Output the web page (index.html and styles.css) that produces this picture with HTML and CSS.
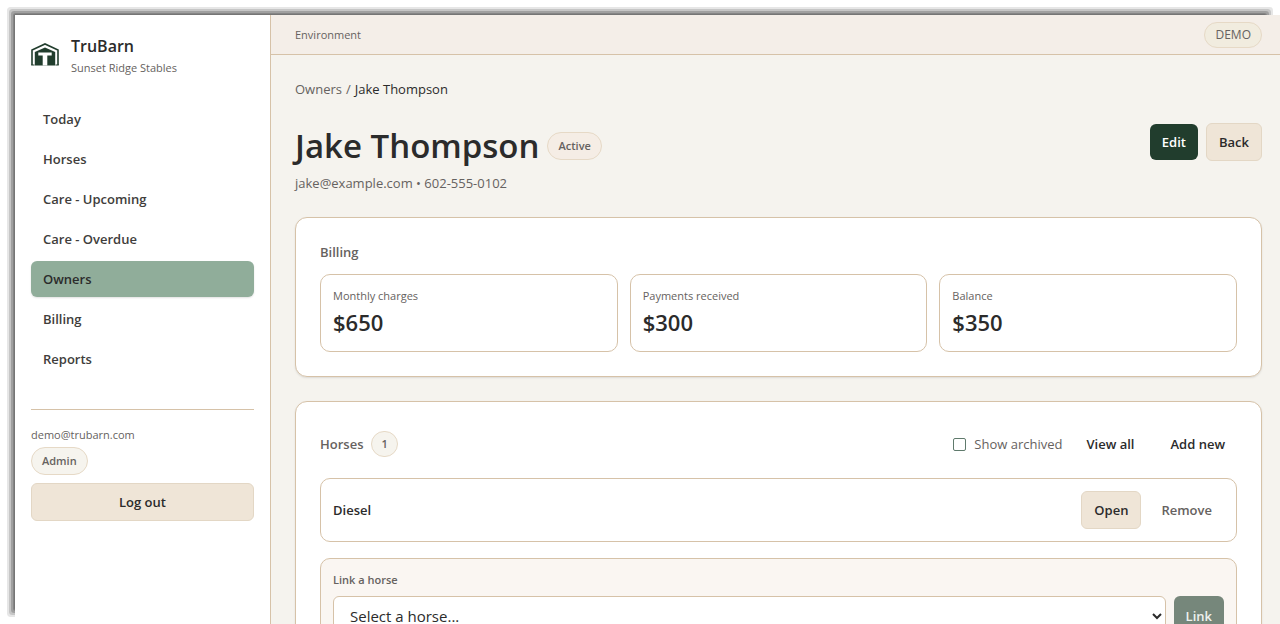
FILE: index.html
```html
<!DOCTYPE html>
<html lang="en">
<head>
<meta charset="utf-8">
<meta name="viewport" content="width=device-width, initial-scale=1">
<title>Jake Thompson - TruBarn</title>
<link rel="stylesheet" href="styles.css">
</head>
<body>
<div class="frame">
  <div class="app">
    <aside class="sidebar">
      <div class="brand">
        <svg class="brand-logo" viewBox="0 0 28 24" aria-hidden="true">
          <path d="M1 22V7L14 1l13 6v15" fill="none" stroke="#213d2d" stroke-width="1.600"/>
          <path d="M0.200 22h3.300M24.500 22h3.300" stroke="#213d2d" stroke-width="1"/>
          <path d="M3.800 22.500V9L14 4.500 24.200 9v13.500z" fill="#213d2d"/>
          <path d="M7.300 9.500h13.400v3h-4.400v10h-4.600v-10H7.300z" fill="#fff"/>
        </svg>
        <div>
          <div class="brand-name">TruBarn</div>
          <div class="small">Sunset Ridge Stables</div>
        </div>
      </div>
      <nav class="nav">
        <a class="nav-item" href="#">Today</a>
        <a class="nav-item" href="#">Horses</a>
        <a class="nav-item" href="#">Care - Upcoming</a>
        <a class="nav-item" href="#">Care - Overdue</a>
        <a class="nav-item nav-item-active" href="#" aria-current="page">Owners</a>
        <a class="nav-item" href="#">Billing</a>
        <a class="nav-item" href="#">Reports</a>
      </nav>
      <div class="account">
        <div class="small">demo@trubarn.com</div>
        <span class="pill pill-plain">Admin</span>
        <button class="btn btn-secondary account-logout" type="button">Log out</button>
      </div>
    </aside>
    <div class="content">
      <header class="topbar">
        <span class="small">Environment</span>
        <span class="pill pill-demo">DEMO</span>
      </header>
      <main class="main">
        <nav class="crumbs" aria-label="Breadcrumb">
          <a class="crumb-link" href="#">Owners</a>
          <span>/</span>
          <span class="crumb-current">Jake Thompson</span>
        </nav>
        <div class="page-head">
          <div>
            <div class="page-title-row">
              <h1 class="page-title">Jake Thompson</h1>
              <span class="pill pill-active">Active</span>
            </div>
            <div class="page-sub">jake@example.com • 602-555-0102</div>
          </div>
          <div class="actions">
            <button class="btn btn-primary" type="button">Edit</button>
            <a class="btn btn-secondary" href="#">Back</a>
          </div>
        </div>
        <section class="card">
          <h2 class="card-title">Billing</h2>
          <div class="stats">
            <div class="stat"><div class="stat-label">Monthly charges</div><div class="stat-value">$650</div></div>
            <div class="stat"><div class="stat-label">Payments received</div><div class="stat-value">$300</div></div>
            <div class="stat"><div class="stat-label">Balance</div><div class="stat-value">$350</div></div>
          </div>
        </section>
        <section class="card">
          <div class="card-head">
            <div class="card-heading">
              <h2 class="card-title">Horses</h2>
              <span class="pill pill-plain pill-count">1</span>
            </div>
            <div class="card-tools">
              <label class="check"><input class="check-box" type="checkbox">Show archived</label>
              <div class="tool-links">
                <a class="btn btn-ghost" href="#">View all</a>
                <a class="btn btn-ghost" href="#">Add new</a>
              </div>
            </div>
          </div>
          <div class="horse-row">
            <span class="horse-name">Diesel</span>
            <div class="actions">
              <a class="btn btn-secondary" href="#">Open</a>
              <button class="btn btn-ghost btn-muted" type="button">Remove</button>
            </div>
          </div>
          <form class="link-form">
            <label class="link-label" for="horse">Link a horse</label>
            <div class="link-fields">
              <div class="select-wrap">
                <select class="select" id="horse"><option>Select a horse...</option></select>
                <svg class="select-arrow" viewBox="0 0 10 7" aria-hidden="true"><path d="M1 1l4 4 4-4" fill="none" stroke="#2b2b2b" stroke-width="2"/></svg>
              </div>
              <button class="btn btn-primary" type="button" disabled>Link</button>
            </div>
          </form>
        </section>
      </main>
    </div>
  </div>
</div>
</body>
</html>
```
FILE: styles.css
```css
* { box-sizing: border-box; }

:root {
  --ink: #2b2b2b;
  --muted: #666260;
  --line: #d6c2a8;
  --soft-line: #e6d9c6;
  --green: #213d2d;
  --page: #f5f3ee;
}

body {
  margin: 0;
  background: #fff;
  color: var(--ink);
  font: 13px/20px "Segoe UI", "Open Sans", "Noto Sans", sans-serif;
}

a { color: inherit; text-decoration: none; }
h1, h2 { margin: 0; }

.frame {
  position: relative;
  height: 100vh;
  padding: 15px 0 0 15px;
}

/* Stepped grey shadow along the window's top and left edges */
.frame::before {
  content: "";
  position: absolute;
  inset: 15px;
  box-shadow: 0 0 0 1px #757575, 0 0 0 2px #858585, 0 0 0 4px #a0a0a0, 0 0 0 6px #c6c6c6, 0 0 0 8px #e6e6e6;
  border-radius: 1px;
}

.app {
  position: relative;
  display: flex;
  height: 100%;
  overflow: hidden;
}

.sidebar {
  flex: 0 0 256px;
  padding: 16px;
  background: #fff;
  border-right: 1px solid var(--line);
}

.small { font-size: 11px; line-height: 16px; color: var(--muted); }

.brand {
  display: flex;
  align-items: center;
  gap: 12px;
  padding-top: 3px;
  margin-bottom: 25px;
}
.brand-logo { width: 28px; height: 24px; }
.brand-name { margin-bottom: 2px; font-size: 16px; line-height: 24px; font-weight: 600; }

.nav { display: flex; flex-direction: column; gap: 4px; }
.nav-item {
  padding: 8px 12px;
  border-radius: 6px;
  font-weight: 600;
  color: #403d3b;
}
.nav-item-active {
  background: #90ad9a;
  color: var(--ink);
  box-shadow: 0 1px 2px rgba(0, 0, 0, .12);
}

.account {
  display: flex;
  flex-direction: column;
  align-items: flex-start;
  margin-top: 32px;
  padding-top: 17px;
  border-top: 1px solid var(--line);
}
.account .pill { margin: 4px 0 8px; }
.account-logout { width: 100%; }

.pill {
  display: inline-block;
  padding: 5px 10px;
  border: 1px solid var(--soft-line);
  border-radius: 999px;
  font-size: 11px;
  line-height: 16px;
  font-weight: 600;
  color: var(--muted);
}
.pill-plain { background: #f6f4ee; }
.pill-active { background: #f5ede5; }
.pill-demo { padding: 4px 10px; background: #f1ecdf; font-size: 12px; font-weight: 500; }
.pill-count { padding: 4px 9px; }

.btn {
  display: flex;
  align-items: center;
  justify-content: center;
  padding: 8px 12px;
  border: 0;
  border-radius: 6px;
  background: transparent;
  color: var(--ink);
  font: inherit;
  font-weight: 600;
  cursor: pointer;
}
.btn-primary { background: var(--green); color: #fff; }
.btn-primary:disabled { background: #76877b; color: #eef1ee; }
.btn-secondary { background: #efe5d7; border: 1px solid #e3d7c5; }
.btn-muted { color: var(--muted); }

.content {
  flex: 1;
  min-width: 0;
  display: flex;
  flex-direction: column;
  background: var(--page);
}

.topbar {
  display: flex;
  align-items: center;
  justify-content: space-between;
  min-height: 40px;
  padding: 0 18px 0 24px;
  background: #f4eee8;
  border-bottom: 1px solid var(--line);
}

.main {
  flex: 1;
  min-height: 0;
  display: flex;
  flex-direction: column;
  gap: 24px;
  padding: 24px 18px 24px 24px;
  overflow-y: auto;
  scrollbar-width: none;
}
.main > * { flex-shrink: 0; }

.crumbs { display: flex; gap: 4px; color: var(--muted); }
.crumb-current { color: var(--ink); }

.page-head {
  display: flex;
  justify-content: space-between;
  align-items: flex-start;
}
.page-title-row { display: flex; align-items: center; gap: 8px; margin-bottom: 4px; }
.page-title { font-size: 33px; line-height: 46px; font-weight: 600; }
.page-sub { color: var(--muted); }
.actions { display: flex; align-items: center; gap: 8px; }

.card {
  padding: 24px;
  background: #fff;
  border: 1px solid var(--line);
  border-radius: 12px;
  box-shadow: 0 1px 2px rgba(0, 0, 0, .1);
}
.card-title { font-size: 13px; line-height: 20px; font-weight: 600; color: var(--muted); }

.stats {
  display: grid;
  grid-template-columns: repeat(3, 1fr);
  gap: 12px;
  margin-top: 12px;
}
.stat { padding: 12px; border: 1px solid var(--line); border-radius: 10px; }
.stat-label { font-size: 11px; line-height: 18px; color: var(--muted); }
.stat-value { font-size: 22px; line-height: 34px; font-weight: 600; }

.card-head {
  display: flex;
  align-items: center;
  justify-content: space-between;
  margin-bottom: 16px;
}
.card-heading { display: flex; align-items: center; gap: 8px; }
.card-tools { display: flex; align-items: center; gap: 12px; }
.check { display: flex; align-items: center; gap: 8px; color: var(--muted); }
.check-box {
  appearance: none;
  width: 13px;
  height: 13px;
  margin: 0;
  border: 1px solid #5f7a6c;
  border-radius: 2px;
  background: #fff;
}
.check-box:checked { background: var(--green); }
.tool-links { display: flex; gap: 12px; }

.horse-row {
  display: flex;
  align-items: center;
  justify-content: space-between;
  padding: 12px;
  border: 1px solid var(--line);
  border-radius: 10px;
}
.horse-name { font-weight: 600; }

.link-form {
  margin-top: 16px;
  padding: 12px;
  background: #faf6f2;
  border: 1px solid var(--line);
  border-radius: 10px;
}
.link-label {
  display: block;
  margin-bottom: 7px;
  font-size: 11px;
  line-height: 18px;
  font-weight: 600;
  color: var(--muted);
}
.link-fields { display: flex; gap: 8px; }
.select-wrap { position: relative; flex: 1; }
.select {
  appearance: none;
  width: 100%;
  height: 40px;
  padding: 0 16px;
  border: 1px solid var(--line);
  border-radius: 6px;
  background: #fff;
  color: var(--ink);
  font: inherit;
  font-size: 15px;
}
.select-arrow { position: absolute; right: 4px; top: 17px; width: 10px; height: 7px; pointer-events: none; }
```
